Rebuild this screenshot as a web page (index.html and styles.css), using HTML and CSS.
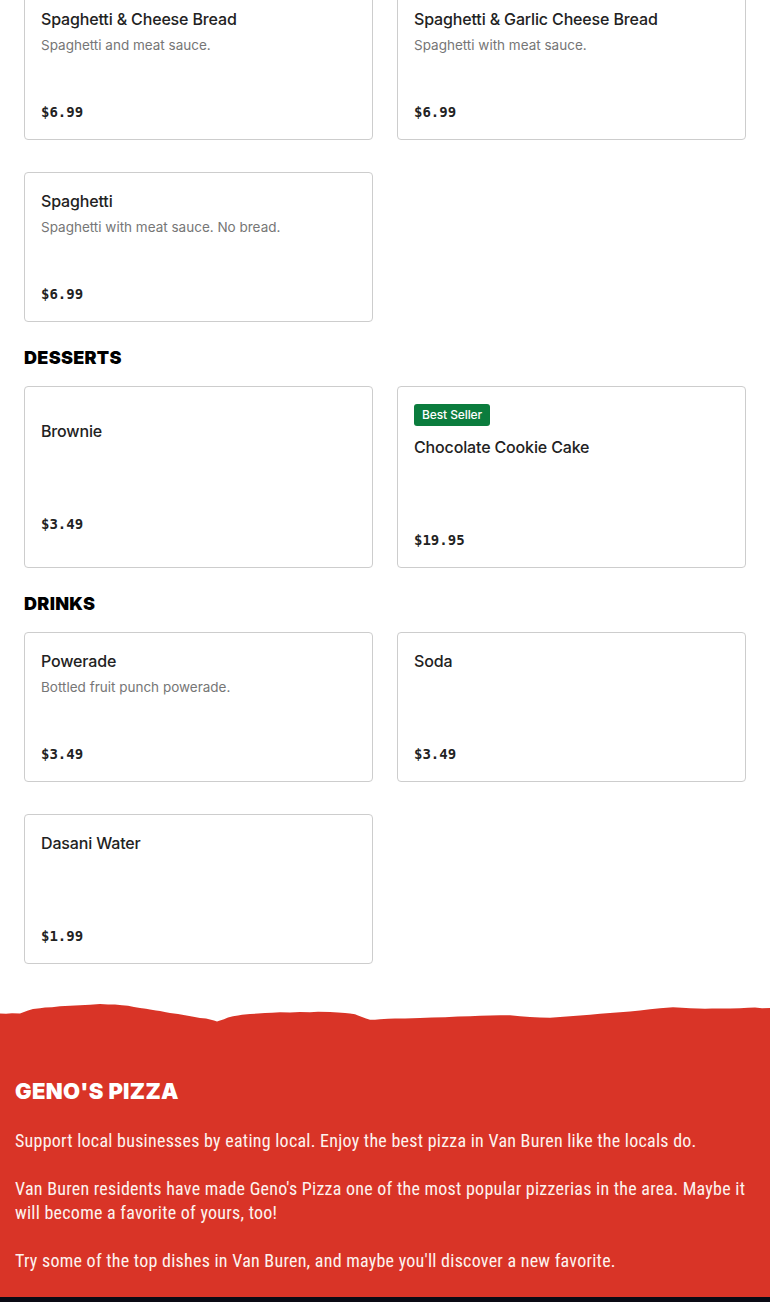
FILE: index.html
```html
<!DOCTYPE html>
<html lang="en">
<head>
<meta charset="utf-8">
<title>Geno's Pizza Menu</title>
<link rel="stylesheet" href="styles.css">
</head>
<body>
<main class="menu">
  <div class="grid grid-first">
    <div class="card">
      <div class="name">Spaghetti &amp; Cheese Bread</div>
      <div class="desc">Spaghetti and meat sauce.</div>
      <div class="price">$6.99</div>
    </div>
    <div class="card">
      <div class="name">Spaghetti &amp; Garlic Cheese Bread</div>
      <div class="desc">Spaghetti with meat sauce.</div>
      <div class="price">$6.99</div>
    </div>
    <div class="card">
      <div class="name">Spaghetti</div>
      <div class="desc">Spaghetti with meat sauce. No bread.</div>
      <div class="price">$6.99</div>
    </div>
  </div>

  <h2 class="section-title">DESSERTS</h2>
  <div class="grid">
    <div class="card">
      <div class="name">Brownie</div>
      <div class="desc"></div>
      <div class="price">$3.49</div>
    </div>
    <div class="card">
      <span class="badge">Best Seller</span>
      <div class="name">Chocolate Cookie Cake</div>
      <div class="desc"></div>
      <div class="price">$19.95</div>
    </div>
  </div>

  <h2 class="section-title">DRINKS</h2>
  <div class="grid">
    <div class="card">
      <div class="name">Powerade</div>
      <div class="desc">Bottled fruit punch powerade.</div>
      <div class="price">$3.49</div>
    </div>
    <div class="card">
      <div class="name">Soda</div>
      <div class="desc"></div>
      <div class="price">$3.49</div>
    </div>
    <div class="card">
      <div class="name">Dasani Water</div>
      <div class="desc"></div>
      <div class="price">$1.99</div>
    </div>
  </div>
</main>

<footer class="footer">
  <svg class="torn" viewBox="0 0 770 26" preserveAspectRatio="none" aria-hidden="true">
    <path fill="#d93427" d="M0 12.5 L6 12.8 L12 12.2 L20 12.4 L24 11 L28 9.6 L33 8 L40 7.2 L45 6.6 L52 6.2 L60 5.2 L70 4.8 L80 4.2 L90 3.8 L100 3 L108 3.4 L115 3.6 L122 4.2 L128 4.8 L134 6 L140 7 L146 7.8 L150 8.4 L156 9.4 L160 10 L166 11.2 L170 12 L178 13 L185 14.2 L192 15.6 L200 17 L206 17.6 L210 18.6 L214 19.6 L217 20.4 L220 19.6 L224 18.2 L228 16.4 L233 15.2 L238 14.4 L242 13.8 L250 13 L258 12.6 L265 12 L272 11.8 L280 11.2 L290 11.4 L300 11 L310 11.2 L318 10.8 L330 11 L338 11.6 L345 12 L350 12.4 L355 13.2 L358 14.6 L362 16 L366 17.6 L370 18.8 L375 18.8 L380 18.3 L388 17.8 L395 17.6 L405 17.4 L420 17 L432 16.6 L445 16.2 L458 15.6 L470 15.2 L480 14.8 L490 14.5 L500 14.2 L510 14.3 L520 15.2 L530 16 L540 16.6 L550 16.8 L560 16 L570 15.2 L580 14.4 L590 13.8 L600 12.8 L610 12 L620 11.2 L630 10.4 L640 9.4 L650 8.2 L660 7.2 L673 6.2 L682 6.8 L690 7.2 L698 7.6 L705 7.8 L712 7.4 L720 7.6 L730 7.4 L740 7.2 L748 6.8 L755 6.6 L762 7.2 L770 7 L770 26 L0 26 Z"/>
  </svg>
  <div class="footer-body">
    <h2 class="brand">GENO'S PIZZA</h2>
    <p>Support local businesses by eating local. Enjoy the best pizza in Van Buren like the locals do.</p>
    <p>Van Buren residents have made Geno's Pizza one of the most popular pizzerias in the area. Maybe it will become a favorite of yours, too!</p>
    <p>Try some of the top dishes in Van Buren, and maybe you'll discover a new favorite.</p>
  </div>
  <div class="footer-bar"></div>
</footer>
</body>
</html>
```

FILE: styles.css
```css
* { box-sizing: border-box; }

html, body {
  margin: 0;
  padding: 0;
  background: #ffffff;
}

body {
  font-family: Inter, "Noto Sans", "DejaVu Sans", sans-serif;
  color: #222222;
}

.menu {
  padding: 0 24px;
}

.grid {
  display: grid;
  grid-template-columns: 1fr 1fr;
  column-gap: 24px;
  row-gap: 32px;
}

.grid-first {
  margin-top: -10px;
}

.card {
  border: 1px solid #cdcdcd;
  border-radius: 4px;
  background: #fff;
  padding: 16px 16px 17px;
  display: flex;
  flex-direction: column;
  justify-content: center;
  align-items: flex-start;
}

.badge {
  display: inline-block;
  background: #0b7c3d;
  color: #ffffff;
  font-size: 12px;
  font-weight: 500;
  line-height: 22px;
  height: 22px;
  padding: 0 8px;
  border-radius: 3px;
  margin: 1px 0 9px;
  letter-spacing: -0.1px;
}

.name {
  font-size: 16px;
  font-weight: 500;
  line-height: 24px;
  color: #222222;
  letter-spacing: -0.15px;
}

.desc {
  margin-top: 4px;
  min-height: 40px;
  font-size: 13.5px;
  line-height: 20px;
  color: #767676;
}

.price {
  margin-top: 27px;
  font-family: "DejaVu Sans Mono", "Liberation Mono", monospace;
  font-size: 14px;
  font-weight: 700;
  line-height: 20px;
  color: #222222;
}

.section-title {
  margin: 25px 0 17px;
  font-size: 18px;
  font-weight: 900;
  line-height: 22px;
  color: #000000;
  letter-spacing: 0.3px;
}

.footer {
  margin-top: 37px;
}

.torn {
  display: block;
  width: 100%;
  height: 26px;
}

.footer-body {
  background: #d93427;
  margin-top: -1px;
  padding: 51px 15px 24px;
  color: #ffffff;
}

.brand {
  margin: 0 0 24px;
  font-family: Inter, "Noto Sans", sans-serif;
  font-size: 22px;
  font-weight: 900;
  line-height: 28px;
  letter-spacing: 0.3px;
}

.footer-body p {
  margin: 0 0 24px;
  font-family: "Liberation Sans Narrow", "Roboto Condensed", "DejaVu Sans Condensed", sans-serif;
  font-size: 18px;
  line-height: 24px;
  letter-spacing: 0.25px;
  color: #fdf3ef;
}

.footer-body p:last-child {
  margin-bottom: 0;
}

.footer-bar {
  background: #0a0a14;
  height: 40px;
}
```
